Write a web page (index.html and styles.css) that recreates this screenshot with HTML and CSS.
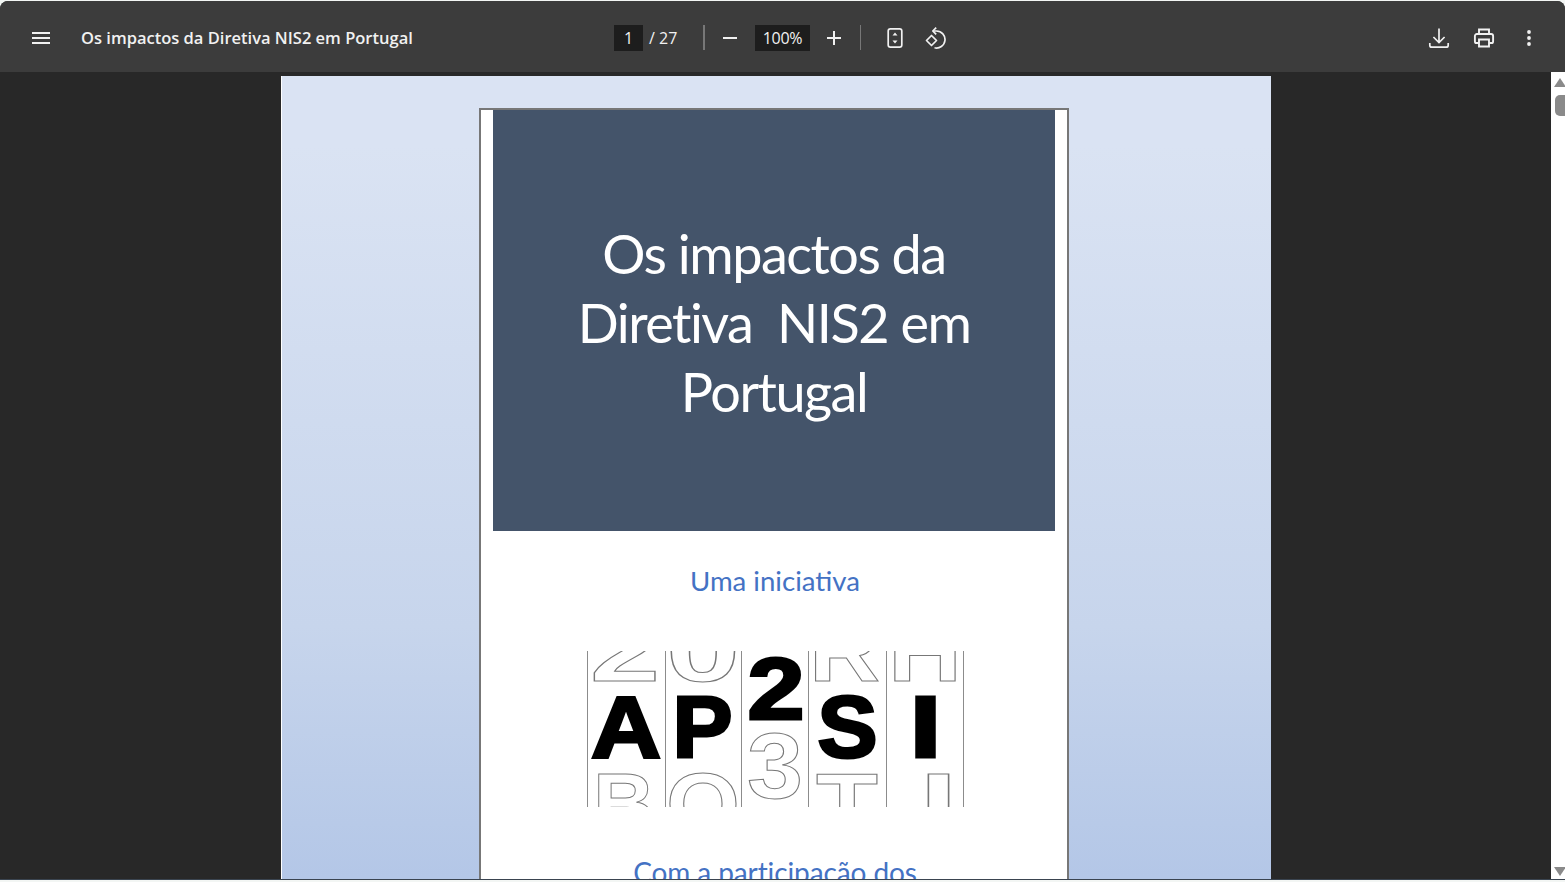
FILE: index.html
```html
<!DOCTYPE html>
<html lang="pt">
<head>
  <meta charset="UTF-8">
  <title>Os impactos da Diretiva NIS2 em Portugal</title>
  <link rel="stylesheet" href="styles.css">
</head>
<body>
  <div class="viewer">
    <header class="toolbar">
      <div class="tb-left">
        <button class="icon-btn menu-btn">
          <svg viewBox="0 0 24 24" width="24" height="24"><path fill="#f1f1f1" d="M3 18h18v-2H3v2zm0-5h18v-2H3v2zm0-7v2h18V6H3z"/></svg>
        </button>
        <span class="doc-title">Os impactos da Diretiva NIS2 em Portugal</span>
      </div>
      <div class="tb-center">
        <span class="num-box page-box">1</span>
        <span class="page-total">/ 27</span>
        <span class="sep first-sep"></span>
        <button class="icon-btn zoom-out">
          <svg viewBox="0 0 24 24" width="24" height="24"><path fill="#f1f1f1" d="M5 11h14v2H5z"/></svg>
        </button>
        <span class="num-box zoom-box">100%</span>
        <button class="icon-btn zoom-in">
          <svg viewBox="0 0 24 24" width="24" height="24"><path fill="#f1f1f1" d="M11 5h2v6h6v2h-6v6h-2v-6H5v-2h6z"/></svg>
        </button>
        <span class="sep second-sep"></span>
        <button class="icon-btn fit-btn">
          <svg viewBox="0 0 24 24" width="24" height="24" fill="none"><rect x="5.2" y="2.9" width="13.6" height="18.2" rx="2.2" stroke="#f1f1f1" stroke-width="1.7"/><path fill="#f1f1f1" d="M12 6.4l2.5 3.1h-5zM12 17.6l-2.5-3.1h5z"/></svg>
        </button>
        <button class="icon-btn rotate-btn">
          <svg viewBox="0 0 24 24" width="24" height="24" fill="none" stroke="#f1f1f1" stroke-width="1.7"><path d="M9.5 9.5l5 5-5 5-5-5z" stroke-linejoin="round"/><path d="M11 5h3.5a8.5 8.5 0 1 1-2 16.76"/><path d="M14.2 1.6L10.8 5l3.4 3.4" stroke-linejoin="round"/></svg>
        </button>
      </div>
      <div class="tb-right">
        <button class="icon-btn">
          <svg viewBox="0 0 24 24" width="24" height="24" fill="none" stroke="#f1f1f1" stroke-width="1.7"><path d="M12 2.5v14M6.4 11l5.6 5.6 5.6-5.6"/><path d="M2.8 17v2.2c0 1.1.9 2 2 2h14.4c1.1 0 2-.9 2-2V17"/></svg>
        </button>
        <button class="icon-btn">
          <svg viewBox="0 0 24 24" width="24" height="24" fill="none" stroke="#f1f1f1" stroke-width="1.9"><path d="M7 8V3.5h10V8"/><path d="M7 17H4.5a1.6 1.6 0 0 1-1.6-1.6V10a2 2 0 0 1 2-2h14.2a2 2 0 0 1 2 2v5.4a1.6 1.6 0 0 1-1.6 1.6H17"/><path d="M7 13.5h10v7H7z"/></svg>
        </button>
        <button class="icon-btn">
          <svg viewBox="0 0 24 24" width="24" height="24"><g fill="#f1f1f1"><circle cx="12" cy="6" r="1.9"/><circle cx="12" cy="12" r="1.9"/><circle cx="12" cy="18" r="1.9"/></g></svg>
        </button>
      </div>
    </header>

    <div class="content">
      <main class="stage">
        <section class="pdf-page">
          <div class="slide">
            <div class="title-block">
              <h1>Os impactos da<br>Diretiva&nbsp; NIS2 em<br>Portugal</h1>
            </div>
            <p class="blue-line initiative">Uma iniciativa</p>
            <svg class="logo" viewBox="0 0 380 156" width="380" height="156">
              <g class="logo-rules">
                <path d="M.5 0v156M78.5 0v156M154.5 0v156M221.5 0v156M299.5 0v156M376.5 0v156"/>
              </g>
              <g class="logo-ghost">
                <text x="3" y="30" textLength="70" lengthAdjust="spacingAndGlyphs">2</text>
                <text x="79" y="30" textLength="74" lengthAdjust="spacingAndGlyphs">0</text>
                <text x="222" y="30" textLength="71" lengthAdjust="spacingAndGlyphs">R</text>
                <text x="301" y="30" textLength="74" lengthAdjust="spacingAndGlyphs">H</text>
                <text x="6" y="183" textLength="62" lengthAdjust="spacingAndGlyphs">B</text>
                <text x="79" y="183" textLength="74" lengthAdjust="spacingAndGlyphs">O</text>
                <text x="229" y="183" textLength="62" lengthAdjust="spacingAndGlyphs">T</text>
                <text x="332" y="183" textLength="39" lengthAdjust="spacingAndGlyphs">I</text>
                <text class="ghost-three" x="160" y="147" textLength="56" lengthAdjust="spacingAndGlyphs">3</text>
              </g>
              <g class="logo-bold">
                <text x="4" y="105.5" textLength="70" lengthAdjust="spacingAndGlyphs">A</text>
                <text x="85.5" y="105.5" textLength="60" lengthAdjust="spacingAndGlyphs">P</text>
                <text class="bold-two" x="160.5" y="67.5" textLength="57" lengthAdjust="spacingAndGlyphs">2</text>
                <text x="230.5" y="105.5" textLength="60" lengthAdjust="spacingAndGlyphs">S</text>
                <text x="322.5" y="105.5" textLength="32" lengthAdjust="spacingAndGlyphs">I</text>
              </g>
            </svg>
            <p class="blue-line participation">Com a participação dos</p>
          </div>
        </section>
      </main>
      <div class="scrollbar">
        <span class="arrow arrow-up"></span>
        <span class="thumb"></span>
        <span class="arrow arrow-down"></span>
      </div>
    </div>
  </div>
</body>
</html>
```

FILE: styles.css
```css
* {
  box-sizing: border-box;
}
html, body {
  height: 100%;
  margin: 0;
  overflow: hidden;
}
body {
  padding-top: 1px;
  background-color: #f3f6f4;
  font-family: "Open Sans", "Noto Sans", sans-serif;
}
.viewer {
  height: 879px;
  display: flex;
  flex-direction: column;
  background-color: #282828;
  border-radius: 8px 8px 0 0;
  border-bottom: 1px solid #3a4450;
  overflow: hidden;
}

/* toolbar */
.toolbar {
  height: 71px;
  flex: none;
  display: flex;
  align-items: center;
  padding-top: 2px;
  background-color: #3c3c3c;
  color: #f1f1f1;
}
.icon-btn {
  width: 24px;
  height: 24px;
  padding: 0;
  border: 0;
  background: none;
  display: block;
}
.tb-left {
  width: 614px;
  flex: none;
  display: flex;
  align-items: center;
  padding-left: 29px;
}
.doc-title {
  margin-left: 28px;
  font-size: 16.5px;
  font-weight: 600;
  white-space: nowrap;
}
.tb-center {
  display: flex;
  align-items: center;
}
.num-box {
  height: 26px;
  background-color: #1d1d1d;
  text-align: center;
  font-size: 16px;
  line-height: 26px;
}
.page-box {
  width: 29px;
}
.page-total {
  margin-left: 6px;
  width: 30px;
  font-size: 16px;
  white-space: nowrap;
}
.sep {
  width: 2px;
  height: 25px;
  background-color: #777;
}
.first-sep {
  margin-left: 24px;
}
.zoom-out {
  margin-left: 13px;
}
.zoom-box {
  width: 55px;
  margin-left: 13px;
  letter-spacing: -.3px;
}
.zoom-in {
  margin-left: 12px;
}
.second-sep {
  width: 1px;
  margin-left: 14px;
}
.fit-btn {
  margin-left: 22px;
}
.rotate-btn {
  margin-left: 15px;
}
.tb-right {
  margin-left: auto;
  display: flex;
  gap: 21px;
  padding-right: 24px;
}

/* page area */
.content {
  flex: 1;
  min-height: 0;
  display: flex;
}
.stage {
  flex: 1;
  overflow: hidden;
  padding: 4px 0 0 281px;
}
.pdf-page {
  width: 990px;
  height: 1400px;
  padding: 32px 0 0 198px;
  background: linear-gradient(#dae3f3 0, #dae3f3 70px, #c7d5ec 550px, #b4c7e7 800px);
  border-left: 1px solid #fff;
}
.slide {
  width: 590px;
  height: 1300px;
  padding: 0 12px;
  background-color: #fff;
  border: 2px solid #777;
  border-bottom: 0;
  margin-left: -1px;
}
.title-block {
  height: 421px;
  padding-top: 4px;
  display: flex;
  align-items: center;
  justify-content: center;
  background-color: #44546a;
}
.title-block h1 {
  margin: 0;
  color: #fff;
  font-family: "Lato", sans-serif;
  font-size: 54px;
  font-weight: 400;
  line-height: 69px;
  text-align: center;
  letter-spacing: -1.5px;
}
.blue-line {
  margin: 0;
  color: #4472c4;
  font-family: "Lato", sans-serif;
  text-align: center;
  font-size: 28px;
  line-height: 34px;
}
.initiative {
  margin-top: 33px;
  padding-left: 2px;
  font-size: 27.6px;
}
.logo {
  display: block;
  margin: 53px 0 0 94px;
  font-family: "Liberation Sans", sans-serif;
  font-weight: 700;
}
.logo-rules path {
  fill: none;
  stroke: #8c8c8c;
  stroke-width: 1;
}
.logo-ghost text {
  font-size: 88px;
  fill: none;
  stroke: #777;
  stroke-width: 1;
}
.logo-ghost .ghost-three {
  font-size: 92px;
}
.logo-bold text {
  font-size: 88px;
  fill: #000;
  stroke: #000;
  stroke-width: 3;
}
.participation {
  margin-top: 48px;
  padding-left: 2px;
  letter-spacing: -.1px;
}

/* scrollbar */
.scrollbar {
  width: 14px;
  flex: none;
  position: relative;
  background-color: #fff;
}
.arrow {
  position: absolute;
  right: -1px;
  width: 0;
  height: 0;
  border-left: 6px solid transparent;
  border-right: 6px solid transparent;
}
.arrow-up {
  top: 6px;
  border-bottom: 9px solid #8a8a8a;
}
.arrow-down {
  bottom: 3px;
  border-top: 9px solid #8a8a8a;
}
.thumb {
  position: absolute;
  top: 23px;
  right: 0;
  width: 10px;
  height: 21px;
  border-radius: 5px 0 0 5px;
  background-color: #8a8a8a;
}
```
